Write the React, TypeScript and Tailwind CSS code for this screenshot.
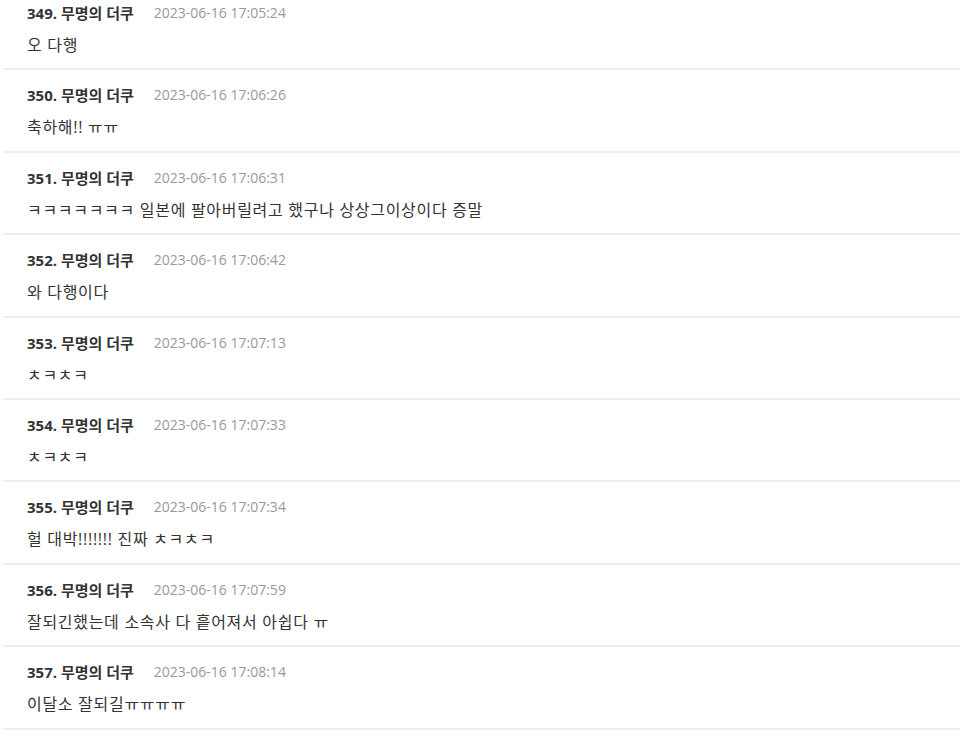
const comments = [
  { no: 349, time: '2023-06-16 17:05:24', text: '오 다행' },
  { no: 350, time: '2023-06-16 17:06:26', text: '축하해!! ㅠㅠ' },
  { no: 351, time: '2023-06-16 17:06:31', text: 'ㅋㅋㅋㅋㅋㅋㅋ 일본에 팔아버릴려고 했구나 상상그이상이다 증말' },
  { no: 352, time: '2023-06-16 17:06:42', text: '와 다행이다' },
  { no: 353, time: '2023-06-16 17:07:13', text: 'ㅊㅋㅊㅋ' },
  { no: 354, time: '2023-06-16 17:07:33', text: 'ㅊㅋㅊㅋ' },
  { no: 355, time: '2023-06-16 17:07:34', text: '헐 대박!!!!!!! 진짜 ㅊㅋㅊㅋ' },
  { no: 356, time: '2023-06-16 17:07:59', text: '잘되긴했는데 소속사 다 흩어져서 아쉽다 ㅠ' },
  { no: 357, time: '2023-06-16 17:08:14', text: '이달소 잘되길ㅠㅠㅠㅠ' },
];

export default function App() {
  return (
    <div className="h-[738px] overflow-hidden bg-white font-['Open_Sans','Noto_Sans_CJK_KR',sans-serif] text-[#333]">
      <ul className="-mt-[12px] pl-[3px]">
        {comments.map(c => (
          <li key={c.no} className="border-b-2 border-[#eee] pt-[15px] pb-[13.4px]">
            <div className="flex items-center pl-[24px] leading-[20px]">
              <strong className="text-[15px] font-bold">{c.no}. 무명의 더쿠</strong>
              <span className="ml-[20px] text-[14px] text-[#999]">{c.time}</span>
            </div>
            <p className="mt-[12px] pl-[24px] text-[16px] leading-[20px] tracking-[0.7px]">{c.text}</p>
          </li>
        ))}
      </ul>
    </div>
  );
}
